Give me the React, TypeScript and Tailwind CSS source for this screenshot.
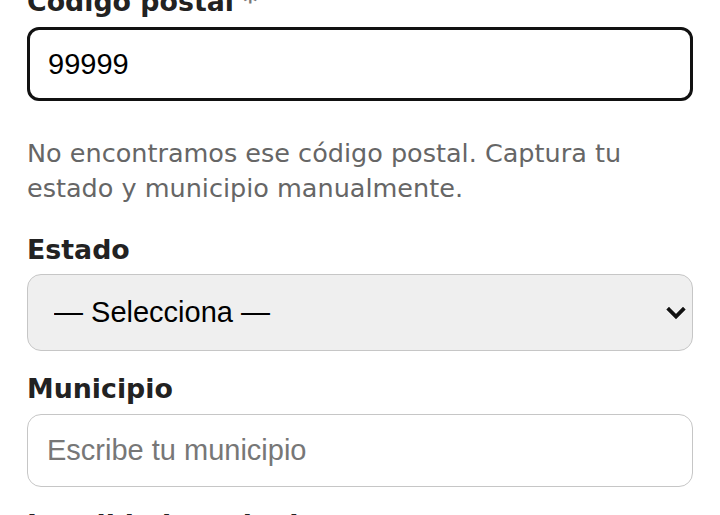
import { useState } from "react";

const labelFont = { fontFamily: '"DejaVu Sans", Verdana, sans-serif' };
const fieldFont = { fontFamily: '"Liberation Sans", Arial, sans-serif' };

const Label = ({ children, className = "" }: { children: React.ReactNode; className?: string }) => (
  <label
    className={`block text-[26.8px] leading-[34px] font-bold text-[#222] ${className}`}
    style={labelFont}
  >
    {children}
  </label>
);

const App = () => {
  const [estado, setEstado] = useState("");

  return (
    <div className="w-[720px] h-[515px] overflow-hidden bg-white">
      <form className="px-[27px] -mt-[15px]">
        <Label>
          Código postal <span className="text-[#777]">*</span>
        </Label>
        <input
          type="text"
          defaultValue="99999"
          className="mt-[8px] block w-full h-[74px] rounded-[12px] border-[3px] border-[#111] bg-white px-[18px] text-[29px] text-black outline-none"
          style={fieldFont}
        />

        <p
          className="mt-[35px] text-[25.5px] leading-[35px] text-[#666]"
          style={labelFont}
        >
          No encontramos ese código postal. Captura tu estado y municipio manualmente.
        </p>

        <Label className="mt-[27px]">Estado</Label>
        <div className="relative mt-[7px]">
          <select
            value={estado}
            onChange={(e) => setEstado(e.target.value)}
            className="block w-full h-[77px] appearance-none rounded-[14px] border-[1.5px] border-[#c6c6c6] bg-[#efefef] pl-[26px] pr-[48px] text-[29px] text-black outline-none"
            style={fieldFont}
          >
            <option value="">— Selecciona —</option>
            <option value="cdmx">Ciudad de México</option>
            <option value="jal">Jalisco</option>
            <option value="nl">Nuevo León</option>
          </select>
          <svg
            className="pointer-events-none absolute right-[7px] top-1/2 -translate-y-1/2"
            width="20"
            height="13"
            viewBox="0 0 20 13"
            fill="none"
          >
            <polyline
              points="3,3 10,10 17,3"
              stroke="#111"
              strokeWidth="3.8"
              strokeLinecap="square"
              strokeLinejoin="miter"
            />
          </svg>
        </div>

        <Label className="mt-[21px]">Municipio</Label>
        <input
          type="text"
          placeholder="Escribe tu municipio"
          className="mt-[8px] block w-full h-[73px] rounded-[14px] border-[1.5px] border-[#c6c6c6] bg-white px-[19px] text-[29px] text-black placeholder:text-[#777] outline-none"
          style={fieldFont}
        />

        <Label className="mt-[21px]">Localidad o colonia</Label>
        <input
          type="text"
          className="mt-[8px] block w-full h-[73px] rounded-[14px] border-[1.5px] border-[#c6c6c6] bg-white px-[19px] text-[29px] outline-none"
          style={fieldFont}
        />
      </form>
    </div>
  );
};

export default App;
